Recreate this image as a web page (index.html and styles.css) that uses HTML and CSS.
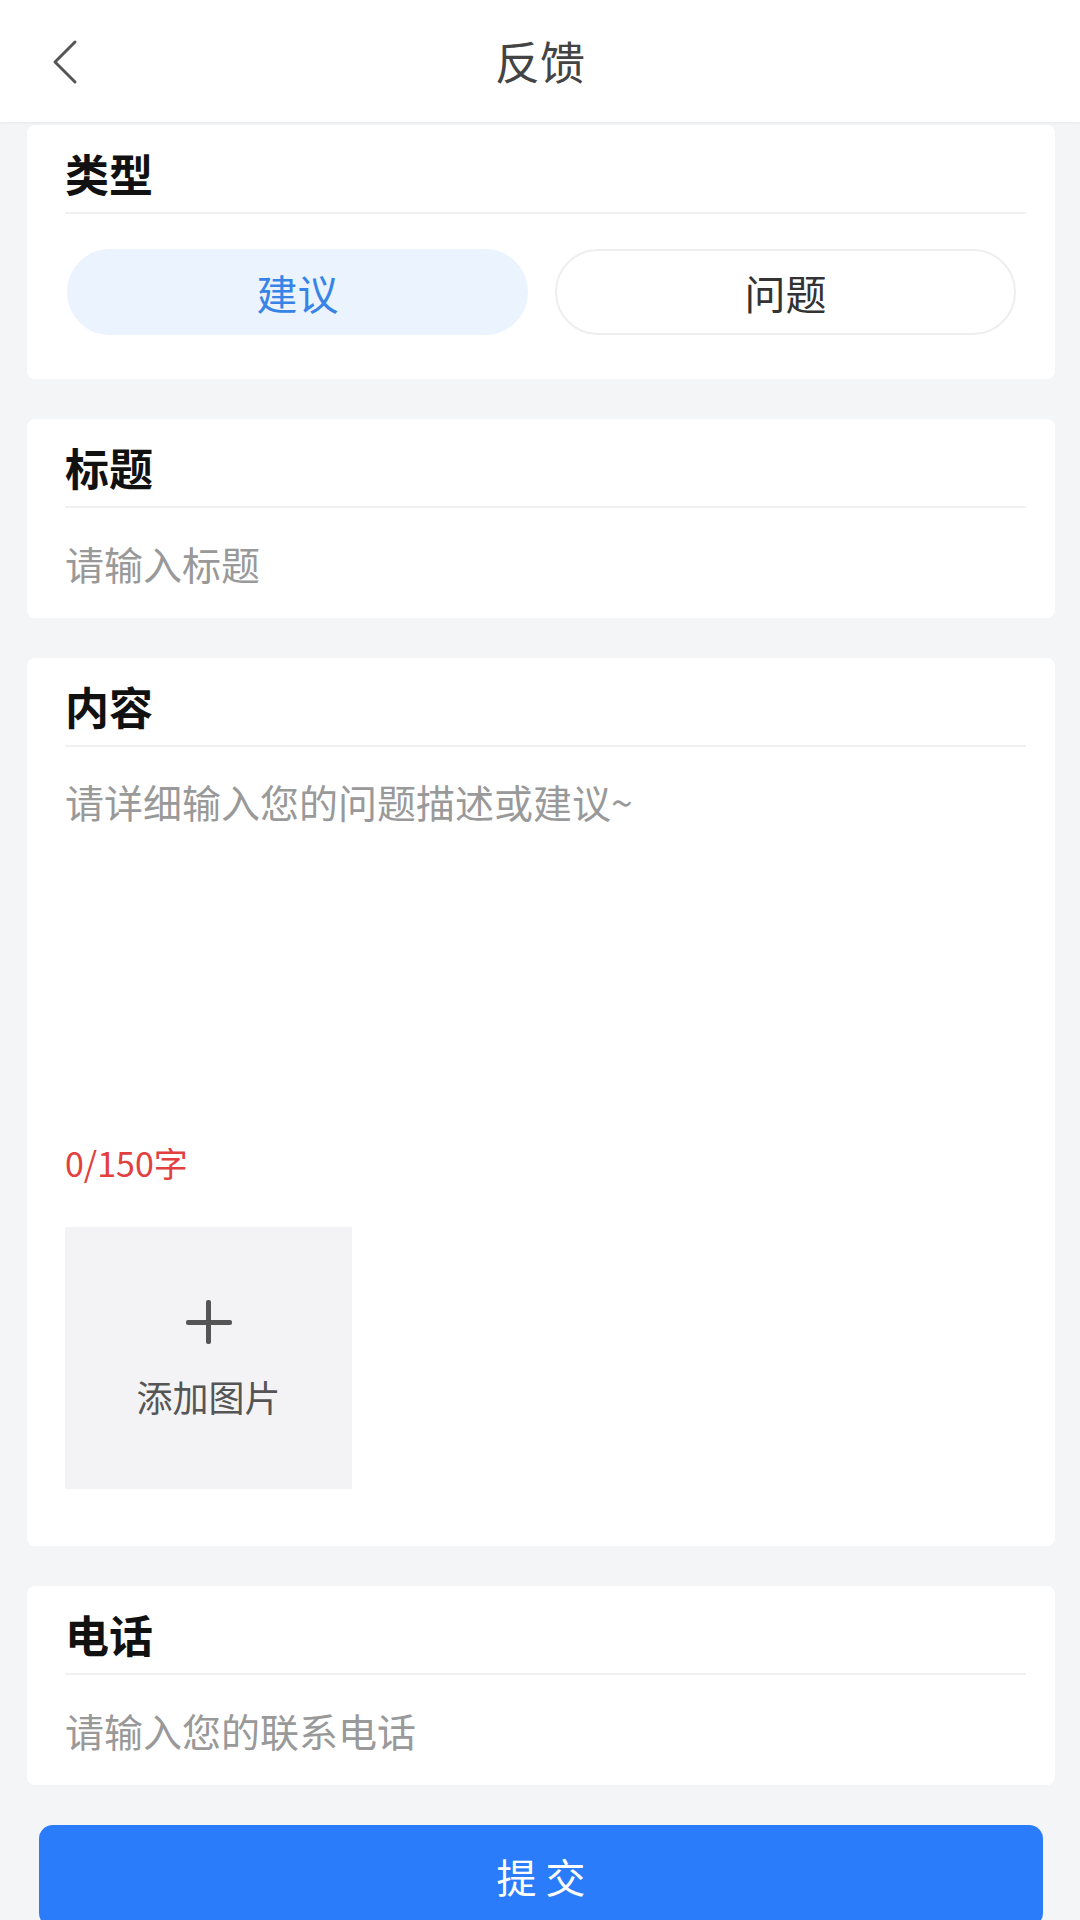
FILE: index.html
```html
<!DOCTYPE html>
<html lang="zh-CN">
<head>
    <meta charset="UTF-8">
    <meta name="viewport" content="width=device-width, initial-scale=1.0">
    <title>反馈</title>
    <link rel="stylesheet" href="styles.css">
</head>
<body>
<div class="header">
    <div class="back">
        <svg width="34" height="46" viewBox="0 0 34 46">
            <path d="M27 3 L7 23 L27 43" fill="none" stroke="#555" stroke-width="3" stroke-linecap="round" stroke-linejoin="round"/>
        </svg>
    </div>
    <div class="title">反馈</div>
    <div></div>
</div>

<div class="main">
    <div class="card">
        <div class="label">类型</div>
        <div class="type-group">
            <div class="type-btn active">建议</div>
            <div class="type-btn">问题</div>
        </div>
    </div>

    <div class="card">
        <div class="label">标题</div>
        <div class="input-row">请输入标题</div>
    </div>

    <div class="card card-content">
        <div class="label">内容</div>
        <div class="textarea">请详细输入您的问题描述或建议~</div>
        <div class="counter">0/150字</div>
        <div class="add-img">
            <div class="plus"></div>
            <div class="add-text">添加图片</div>
        </div>
    </div>

    <div class="card">
        <div class="label">电话</div>
        <div class="input-row">请输入您的联系电话</div>
    </div>

    <div class="submit">提 交</div>
</div>
</body>
</html>
```

FILE: styles.css
```css
body {
    margin: 0;
    width: 1080px;
    height: 1920px;
    overflow: hidden;
    background: #f4f5f7;
    font-family: "Noto Sans CJK SC", "Noto Sans", sans-serif;
}

.header {
    height: 122px;
    background: #fff;
    display: grid;
    grid-template-columns: 1fr auto 1fr;
    align-items: center;
    box-shadow: 0 1px 3px rgba(0, 0, 0, 0.06);
}

.back {
    padding-left: 48px;
    padding-top: 2px;
    display: flex;
    align-items: center;
}

.title {
    font-size: 45px;
    color: #444;
    line-height: 50px;
}

.main {
    padding: 3px 25px 0 27px;
}

.card {
    background: #fff;
    border-radius: 8px;
    padding: 0 29px 0 38px;
    margin-bottom: 40px;
}

.label {
    font-size: 44px;
    font-weight: bold;
    color: #111;
    line-height: 50px;
    padding: 23px 0 14px;
    border-bottom: 2px solid #f0f0f0;
}

.type-group {
    display: flex;
    gap: 27px;
    padding: 35px 10px 44px 2px;
}

.type-btn {
    flex: 1;
    height: 86px;
    border-radius: 43px;
    display: flex;
    align-items: center;
    justify-content: center;
    font-size: 41px;
    color: #333;
    background: #fff;
    border: 2px solid #eeeeee;
    box-sizing: border-box;
}

.type-btn.active {
    background: #eaf3fe;
    border-color: #eaf3fe;
    color: #3784e6;
}

.input-row {
    height: 110px;
    line-height: 110px;
    font-size: 39px;
    color: #999;
}

.textarea {
    height: 347px;
    padding-top: 32px;
    font-size: 39px;
    line-height: 44px;
    color: #999;
}

.counter {
    margin-top: 17px;
    font-size: 34px;
    line-height: 40px;
    color: #e2403f;
}

.add-img {
    margin-top: 44px;
    width: 287px;
    height: 262px;
    background: #f3f3f5;
    display: flex;
    flex-direction: column;
    align-items: center;
    justify-content: center;
    gap: 32px;
}

.plus {
    position: relative;
    width: 46px;
    height: 44px;
}

.plus::before,
.plus::after {
    content: "";
    position: absolute;
    background: #555;
    border-radius: 2px;
}

.plus::before {
    left: 0;
    top: 20px;
    width: 46px;
    height: 5px;
}

.plus::after {
    left: 20px;
    top: 0;
    width: 5px;
    height: 44px;
}

.add-text {
    font-size: 36px;
    line-height: 40px;
    color: #555;
}

.card-content {
    padding-bottom: 57px;
}

.submit {
    margin: 39px 12px 0 12px;
    height: 102px;
    border-radius: 14px;
    background: #2b7cfb;
    color: #fff;
    font-size: 40px;
    display: flex;
    align-items: center;
    justify-content: center;
}
```
